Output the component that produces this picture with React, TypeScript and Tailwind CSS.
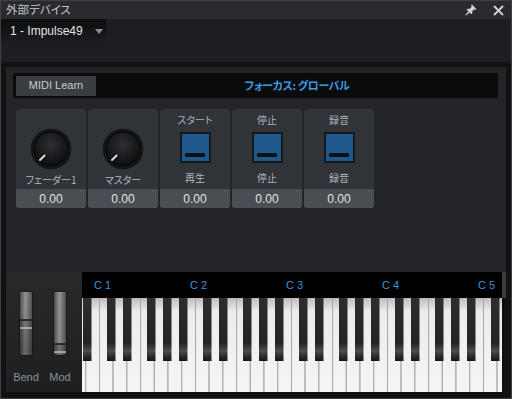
import React from "react";

const jp = "font-['Noto_Sans_CJK_JP',sans-serif] [font-feature-settings:'palt']";
const lat = "font-['Liberation_Sans','Noto_Sans_CJK_JP',sans-serif]";

const cells = [
  { kind: "knob", label: "フェーダー1", value: "0.00" },
  { kind: "knob", label: "マスター", value: "0.00" },
  { kind: "button", top: "スタート", label: "再生", value: "0.00" },
  { kind: "button", top: "停止", label: "停止", value: "0.00" },
  { kind: "button", top: "録音", label: "録音", value: "0.00" },
];

function Knob({ id }: { id: string }) {
  return (
    <svg width="44" height="44" viewBox="0 0 44 44">
      <defs>
        <radialGradient id={id} cx="50%" cy="38%" r="62%">
          <stop offset="0" stopColor="#2e2f32" />
          <stop offset="1" stopColor="#0c0d0f" />
        </radialGradient>
      </defs>
      <circle cx="22" cy="22" r="21" fill="#141517" stroke="#393b3f" strokeWidth="1" />
      <circle cx="22" cy="22" r="17" fill={`url(#${id})`} stroke="#050506" strokeWidth="1" />
      <line x1="11" y1="33" x2="15.5" y2="28.5" stroke="#dcdcdc" strokeWidth="2" strokeLinecap="round" />
    </svg>
  );
}

function Slider({ id, thumb }: { id: string; thumb: number }) {
  const stripes = [];
  for (let y = 3; y < 63; y += 2) {
    stripes.push(<line key={y} x1="1" x2="13" y1={y} y2={y} stroke="#000" strokeOpacity="0.07" />);
  }
  return (
    <svg width="14" height="65" viewBox="0 0 14 65">
      <defs>
        <linearGradient id={`${id}h`} x1="0" x2="1" y1="0" y2="0">
          <stop offset="0" stopColor="#4a4a4a" />
          <stop offset="0.45" stopColor="#9a9a9a" />
          <stop offset="1" stopColor="#505050" />
        </linearGradient>
        <linearGradient id={`${id}v`} x1="0" x2="0" y1="0" y2="1">
          <stop offset="0" stopColor="#000" stopOpacity="0" />
          <stop offset={thumb / 65} stopColor="#000" stopOpacity="0.05" />
          <stop offset={(thumb + 1) / 65} stopColor="#000" stopOpacity="0.18" />
          <stop offset="1" stopColor="#000" stopOpacity="0.3" />
        </linearGradient>
      </defs>
      <rect x="0.5" y="0.5" width="13" height="64" rx="1.5" fill={`url(#${id}h)`} stroke="#1b1b1c" />
      <rect x="0.5" y="0.5" width="13" height="64" rx="1.5" fill={`url(#${id}v)`} />
      {stripes}
      <rect x="1" y={thumb} width="12" height="2" fill="#2a2a2a" />
      <rect x="1" y={thumb + 8} width="12" height="2" fill="#c4c4c4" fillOpacity="0.7" />
    </svg>
  );
}

function Keys() {
  const ww = 96 / 7;
  const whites = [];
  for (let n = -2; n < 30; n++) {
    const x = 17 + n * ww;
    whites.push(<rect key={`w${n}`} x={x} y="0" width={ww} height="94" fill="url(#wk)" />);
    whites.push(<line key={`l${n}`} x1={x + 0.5} x2={x + 0.5} y1="0" y2="94" stroke="#a8a8aa" />);
  }
  const blacks = [];
  for (let o = -1; o < 5; o++) {
    [8, 24, 48, 64, 80].forEach((off) => {
      const x = 17 + o * 96 + off;
      if (x + 8 > 0 && x < 420) {
        blacks.push(<rect key={`b${o}-${off}`} x={x} y="0" width="8.5" height="63" fill="url(#bk)" />);
      }
    });
  }
  return (
    <svg width="420" height="94" viewBox="0 0 420 94">
      <defs>
        <linearGradient id="wk" x1="0" x2="0" y1="0" y2="1">
          <stop offset="0" stopColor="#bdbdbf" />
          <stop offset="0.14" stopColor="#ececee" />
          <stop offset="1" stopColor="#f5f5f7" />
        </linearGradient>
        <linearGradient id="bk" x1="0" x2="0" y1="0" y2="1">
          <stop offset="0" stopColor="#2c2e31" />
          <stop offset="0.72" stopColor="#222326" />
          <stop offset="0.84" stopColor="#4a4c50" />
          <stop offset="0.92" stopColor="#2b2c2e" />
          <stop offset="1" stopColor="#141516" />
        </linearGradient>
      </defs>
      {whites}
      {blacks}
    </svg>
  );
}

export default function App() {
  return (
    <div className={`w-[512px] h-[399px] border border-[#3f4044] bg-[#2a2b2e] flex flex-col overflow-hidden ${lat}`}>
      {/* title bar */}
      <div className="h-[18px] flex items-center justify-between pl-[5px] pr-[7px]">
        <span className={`text-[11.5px] leading-none text-[#c8c8c8] ${jp}`}>外部デバイス</span>
        <div className="flex items-center gap-[16px]">
          <svg width="12" height="12" viewBox="0 0 12 12" fill="#cfcfcf">
            <path d="M7 0.5 L11.5 5 L10.3 6 L9.3 5.3 L7.3 7.3 L7.3 9.3 L6.3 10.3 L1.7 5.7 L2.7 4.7 L4.7 4.7 L6.7 2.7 L6 1.7 Z" />
            <path d="M3.4 7.2 L4.8 8.6 L1 11.6 L0.4 11 Z" />
          </svg>
          <svg width="11" height="11" viewBox="0 0 11 11" stroke="#d2d2d2" strokeWidth="1.8">
            <path d="M1 1 L10 10 M10 1 L1 10" />
          </svg>
        </div>
      </div>

      {/* device tab */}
      <div className="h-[43px] bg-[#1c1e21]">
        <div className="w-[105px] h-[24px] bg-gradient-to-b from-[#0c0d0f] to-[#1b1d20] flex items-center pl-[9px] gap-[12px]">
          <span className="text-[12px] leading-none text-[#e4e4e4]">1 - Impulse49</span>
          <svg width="8" height="5" viewBox="0 0 8 5">
            <path d="M0 0 H8 L4 5 Z" fill="#8c8c8e" />
          </svg>
        </div>
      </div>

      {/* frame */}
      <div className="flex-1 bg-[#111214] pt-[5px] px-[5px] pb-[6px]">
        <div className="h-full bg-[#232427] flex flex-col">
          {/* header */}
          <div className="mt-[6px] ml-[7px] mr-[8px] h-[25px] rounded-[2px] bg-[#0b0b0c] flex items-center pl-[3px]">
            <div className="w-[80px] h-[20px] bg-[#3a3d42] flex items-center justify-center text-[11px] text-[#c9cdd2]">
              MIDI Learn
            </div>
            <div className={`flex-1 text-center text-[11px] font-semibold tracking-[-0.4px] text-[#3b9be3] ${jp}`}>
              フォーカス: グローバル
            </div>
          </div>

          {/* controls */}
          <div className="mt-[11px] ml-[10px] flex gap-[2px]">
            {cells.map((c, i) => (
              <div key={i} className="w-[70px] h-[99px] rounded-[3px] overflow-hidden bg-[#303337] flex flex-col">
                <div className="flex-1 flex flex-col items-center">
                  {c.kind === "knob" ? (
                    <div className="mt-[18px] h-[44px]">
                      <Knob id={`kn${i}`} />
                    </div>
                  ) : (
                    <>
                      <div className={`h-[20px] flex items-center text-[10px] text-[#aab1b9] ${jp}`}>{c.top}</div>
                      <div className="mt-[3px] w-[31px] h-[31px] border-2 border-[#16181b] bg-[#1f588a] flex items-end justify-center pb-[4px]">
                        <div className="w-[20px] h-[4px] rounded-[1px] bg-[#0f1012]" />
                      </div>
                    </>
                  )}
                  <div
                    className={`${c.kind === "knob" ? "mt-[1px]" : "mt-[7px]"} h-[14px] flex items-center text-[10px] text-[#aeb6bf] ${jp}`}
                  >
                    {c.label}
                  </div>
                </div>
                <div className="h-[19px] bg-[#4a4d51] flex items-center justify-center text-[12px] text-[#dde3ea]">
                  {c.value}
                </div>
              </div>
            ))}
          </div>

          <div className="flex-1" />

          {/* keyboard row */}
          <div className="h-[120px] flex">
            <div className="w-[76px] bg-gradient-to-b from-[#28292b] to-[#1e1f21] flex pl-[3px] pt-[19px]">
              {[
                { n: "Bend", t: 28 },
                { n: "Mod", t: 52 },
              ].map((s) => (
                <div key={s.n} className="w-[34px] flex flex-col items-center">
                  <Slider id={`sl${s.n}`} thumb={s.t} />
                  <div className="mt-[14px] h-[14px] flex items-center text-[11px] text-[#8e9194]">{s.n}</div>
                </div>
              ))}
            </div>
            <div className="w-[420px] flex flex-col">
              <div className="h-[26px] bg-black flex items-center pl-[12px] text-[11px] text-[#3d90dd]">
                {["C 1", "C 2", "C 3", "C 4", "C 5"].map((l) => (
                  <span key={l} className="w-[96px] shrink-0">
                    {l}
                  </span>
                ))}
              </div>
              <Keys />
            </div>
            <div className="flex-1 flex flex-col">
              <div className="h-[26px] bg-[#3a3b3d]" />
              <div className="flex-1 bg-[#0d0e0f]" />
            </div>
          </div>
        </div>
      </div>
    </div>
  );
}
